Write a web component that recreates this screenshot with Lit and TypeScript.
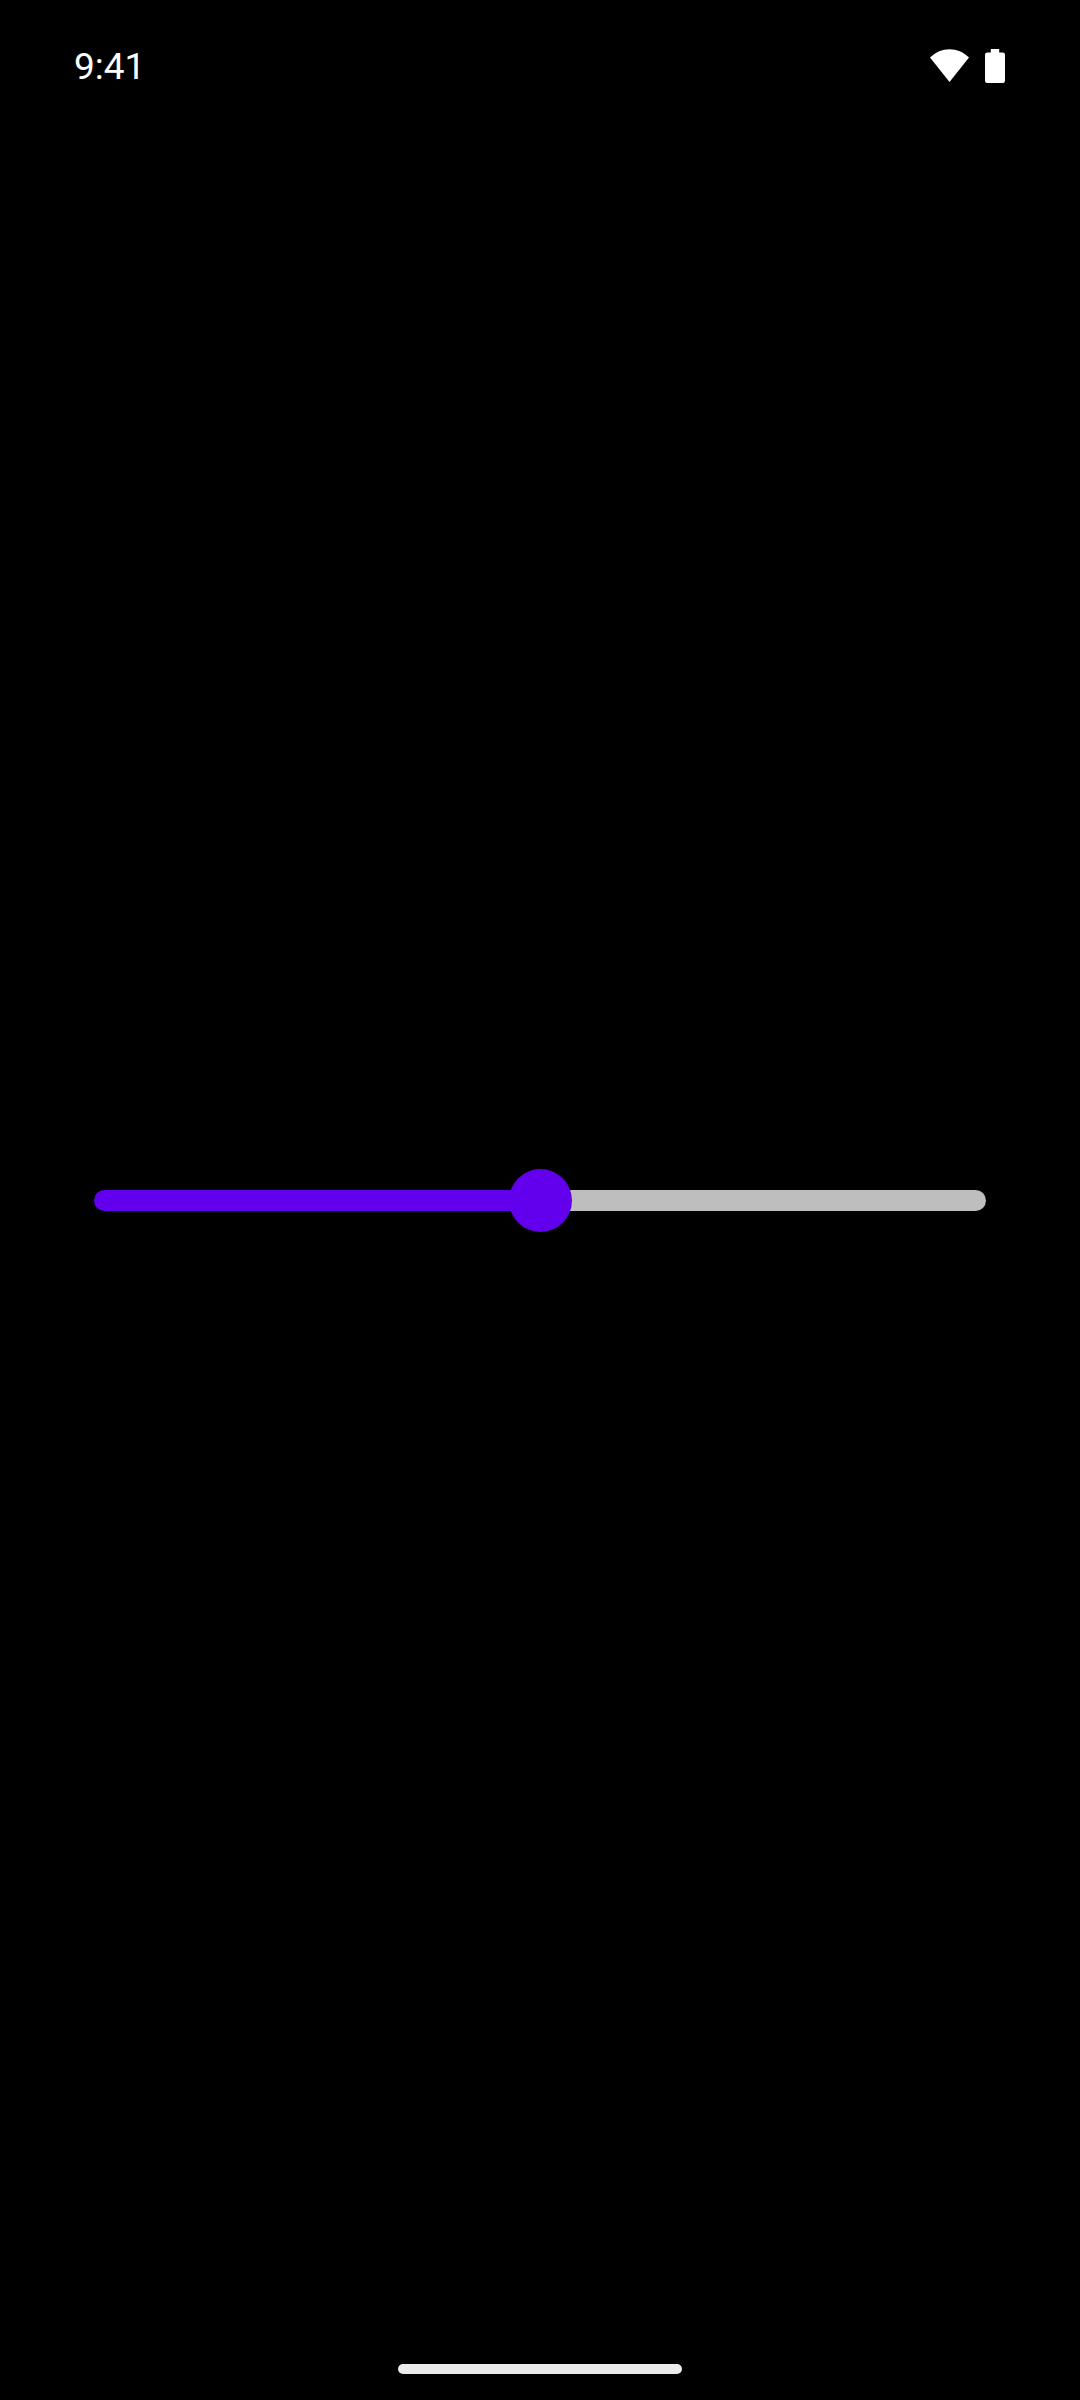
import { LitElement, html, css } from "lit";
import { customElement, state } from "lit/decorators.js";
import { styleMap } from "lit/directives/style-map.js";

@customElement("status-bar")
class StatusBar extends LitElement {
  static styles = css`
    :host {
      display: flex;
      align-items: flex-start;
      justify-content: space-between;
      box-sizing: border-box;
      height: 132px;
      padding: 45px 75px 0 74px;
      color: #fff;
      font-family: Roboto, sans-serif;
    }
    .time {
      font-size: 37px;
      line-height: 44px;
    }
    .icons {
      display: flex;
      gap: 16px;
      padding-top: 4px;
    }
    .icon {
      display: block;
      fill: #fff;
    }
  `;

  render() {
    return html`
      <time class="time">9:41</time>
      <div class="icons">
        <svg class="icon" width="39" height="34" viewBox="0 0 39 34" role="img" aria-label="Wi-Fi">
          <path d="M0 8.600C5.600 3 12.200 0.200 19.500 0.200S33.400 3 39 8.600L19.500 33Z" />
        </svg>
        <svg class="icon" width="20" height="34" viewBox="0 0 20 34" role="img" aria-label="Battery">
          <path d="M5.800 0H14.200V3.400H17.700A2.300 2.300 0 0 1 20 5.700V31.700A2.300 2.300 0 0 1 17.700 34H2.300A2.300 2.300 0 0 1 0 31.700V5.700A2.300 2.300 0 0 1 2.300 3.400H5.800Z" />
        </svg>
      </div>
    `;
  }
}

@customElement("value-slider")
class ValueSlider extends LitElement {
  static styles = css`
    :host {
      display: block;
    }
    .slider {
      display: block;
      width: 100%;
      height: 63px;
      margin: 0;
      appearance: none;
      -webkit-appearance: none;
      background: transparent;
      cursor: pointer;
    }
    .slider::-webkit-slider-runnable-track {
      height: 21px;
      border-radius: 11px;
      background: linear-gradient(to right, #6200ee var(--fill), #bebebe var(--fill));
    }
    .slider::-webkit-slider-thumb {
      -webkit-appearance: none;
      width: 63px;
      height: 63px;
      margin-top: -21px;
      border: none;
      border-radius: 50%;
      background: #6200ee;
    }
    .slider:focus-visible {
      outline: none;
    }
  `;

  @state() private value = 50;

  private onInput(event: Event) {
    this.value = Number((event.target as HTMLInputElement).value);
  }

  render() {
    return html`
      <input
        class="slider"
        type="range"
        min="0"
        max="100"
        aria-label="Value"
        .value=${String(this.value)}
        style=${styleMap({ "--fill": `${this.value}%` })}
        @input=${this.onInput}
      />
    `;
  }
}

@customElement("app-root")
class AppRoot extends LitElement {
  static styles = css`
    :host {
      display: flex;
      flex-direction: column;
      min-height: 100vh;
      background: #000;
    }
    .content {
      flex: 1;
      display: flex;
      flex-direction: column;
      justify-content: center;
      padding: 0 94px;
    }
    .navigation {
      display: flex;
      align-items: flex-end;
      justify-content: center;
      box-sizing: border-box;
      height: 131px;
      padding-bottom: 26px;
    }
    .handle {
      width: 284px;
      height: 10px;
      border-radius: 5px;
      background: #ebebeb;
    }
  `;

  render() {
    return html`
      <status-bar></status-bar>
      <main class="content">
        <value-slider></value-slider>
      </main>
      <footer class="navigation">
        <div class="handle"></div>
      </footer>
    `;
  }
}
